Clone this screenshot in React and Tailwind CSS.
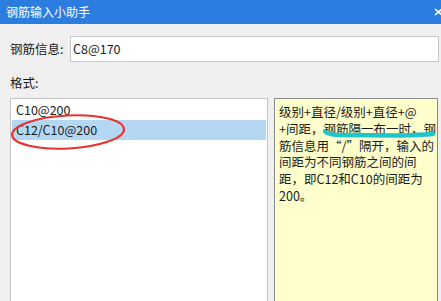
import React from 'react';

const font = { fontFamily: '"Noto Sans CJK SC", "Noto Sans", sans-serif' };

const helpLines = [
    '级别+直径/级别+直径+@',
    '+间距，钢筋隔一布一时，钢',
    '筋信息用“/”隔开，输入的',
    '间距为不同钢筋之间的间',
    '距，即C12和C10的间距为',
    '200。',
];

function TitleBar() {
    return (
        <div className="h-[24px] bg-[#2c7de0] flex items-center justify-between pl-[6px] text-white text-[12px]">
            <span>钢筋输入小助手</span>
            <svg width="9" height="8" viewBox="0 0 9 8" className="mr-[-2px]">
                <path d="M1 1 L8 7 M8 1 L1 7" stroke="#fff" strokeWidth="1.6" />
            </svg>
        </div>
    );
}

function FormatList({ items, selected }) {
    return (
        <div className="w-[258px] h-full bg-white border border-[#c4c4c4] p-[1px]">
            {items.map((item, i) => (
                <div key={item} className={`h-[20px] leading-[20px] pl-[4px] ${i === selected ? 'bg-[#b4d8f3]' : ''}`}>
                    {item}
                </div>
            ))}
        </div>
    );
}

export default function App() {
    return (
        <div className="relative w-[441px] h-[301px] overflow-hidden bg-[#f0f0f0] text-[12.5px] text-[#1a1a1a]" style={font}>
            <TitleBar />
            <div className="flex items-center mt-[12px] pl-[10px] pr-[2px]">
                <span className="w-[60px]">钢筋信息:</span>
                <div className="flex-1 h-[26px] bg-white border border-[#c8c8c8] flex items-center pl-[2px]">C8@170</div>
            </div>
            <div className="pl-[10px] mt-[13px] leading-[16px]">格式:</div>
            <div className="flex mt-[7px] pl-[10px] h-[210px]">
                <FormatList items={['C10@200', 'C12/C10@200']} selected={1} />
                <div className="ml-[6px] w-[164px] h-full bg-[#ffffcc] border border-[#8a8a8a] pl-[4px] pt-[5px] leading-[16.8px]">
                    {helpLines.map((line) => (
                        <div key={line} className="whitespace-nowrap">{line}</div>
                    ))}
                </div>
            </div>
            {/* hand-drawn annotations on top */}
            <svg className="absolute inset-0 pointer-events-none" width="441" height="301">
                <ellipse cx="68" cy="132" rx="56" ry="16.5" transform="rotate(-3 68 132)" fill="none" stroke="#e8322f" strokeWidth="2.2" />
                <path d="M325 131.5 Q330 135 340 135 L400 135.5 Q420 135 433 134" fill="none" stroke="#1ec6cc" strokeWidth="4.5" strokeLinecap="round" />
            </svg>
        </div>
    );
}
